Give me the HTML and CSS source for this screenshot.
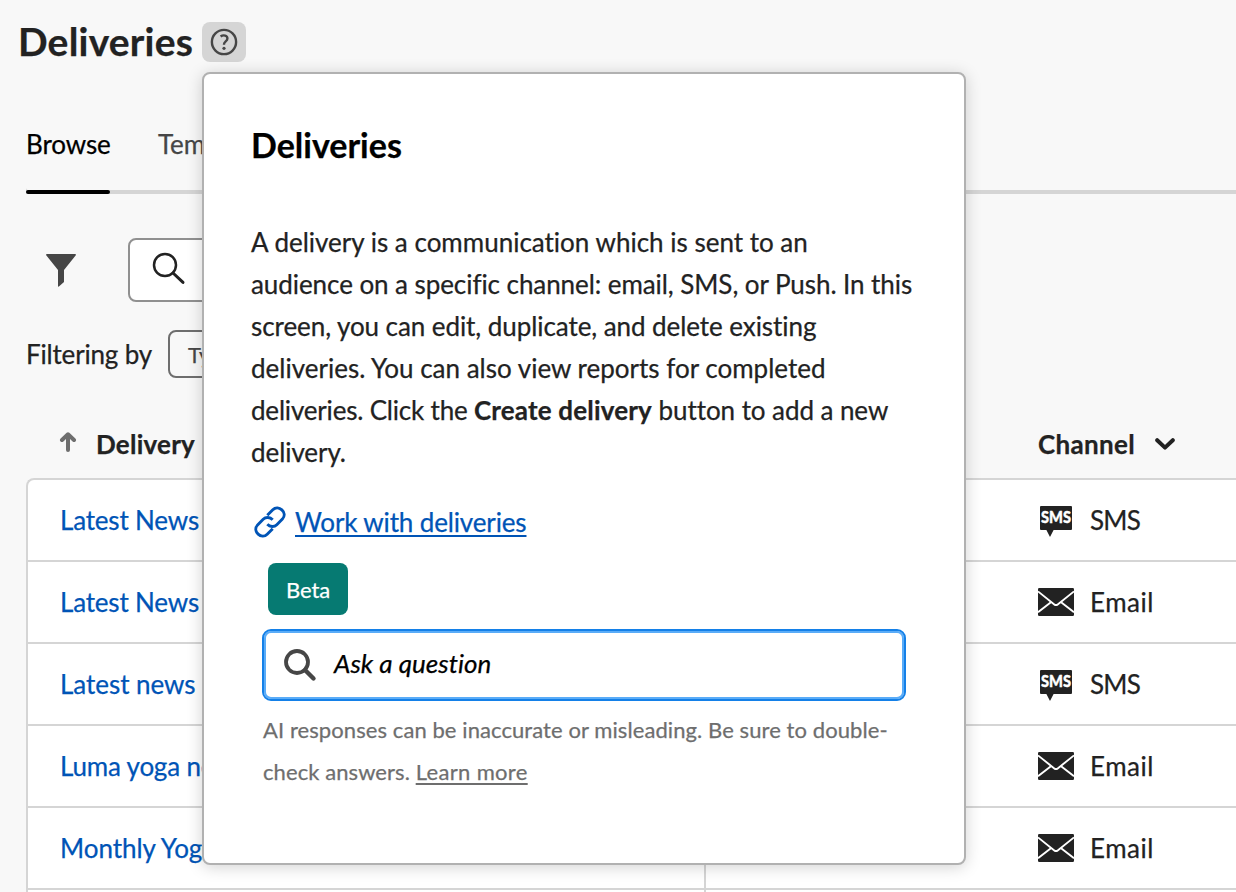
FILE: index.html
```
<!DOCTYPE html>
<html lang="en">
<head>
<meta charset="utf-8">
<title>Deliveries</title>
<link rel="stylesheet" href="styles.css">
</head>
<body>
<svg class="sprite" aria-hidden="true">
  <symbol id="mail" viewBox="0 0 36 28">
    <rect width="36" height="28" rx="1.2" fill="#222"/>
    <path d="M0 3.4 16.3 16.4Q18 17.8 19.7 16.4L36 3.4M0 24.2 13.2 14.1M36 24.2 22.8 14.1" fill="none" stroke="#fff" stroke-width="1.9"/>
  </symbol>
  <symbol id="sms" viewBox="0 0 36 32">
    <path d="M3 0H33a1 1 0 0 1 1 1V23a1 1 0 0 1-1 1H15.6L12 31 8.4 24H3a1 1 0 0 1-1-1V1a1 1 0 0 1 1-1Z" fill="#222"/>
    <text class="sms-text" x="18" y="17" text-anchor="middle" textLength="30" lengthAdjust="spacingAndGlyphs">SMS</text>
  </symbol>
</svg>
<main class="page">
  <header class="header">
    <h1 class="title">Deliveries</h1>
    <button class="help" aria-label="Help">
      <svg width="28" height="28" viewBox="0 0 28 28" fill="none" stroke="#464646">
        <circle cx="14" cy="14" r="12.1" stroke-width="2.4"/>
        <path d="M10.6 8.5C13.5 6.4 17.4 7.5 17.4 10.4C17.4 13.2 14 13.4 14 16.2V16.7" stroke-width="2.4"/>
        <circle cx="14" cy="20.3" r="1.6" fill="#464646" stroke="none"/>
      </svg>
    </button>
  </header>
  <nav class="tabs">
    <a class="tab tab-active">Browse</a>
    <a class="tab">Templates</a>
  </nav>
  <div class="toolbar">
    <svg class="funnel" width="30" height="33" viewBox="0 0 30 33"><path d="M.8 0H29.2a.8.8 0 0 1 .6 1.3L18 16V28L12.9 32.5Q12 33 12 32V16L.2 1.3A.8.8 0 0 1 .8 0Z" fill="#464646"/></svg>
    <div class="search">
      <svg width="34" height="34" viewBox="0 0 34 34" fill="none" stroke="#222"><circle cx="13" cy="13" r="11" stroke-width="2.5"/><path d="M21 21 31 30.4" stroke-width="3" stroke-linecap="round"/></svg>
    </div>
  </div>
  <div class="filters">
    <span class="filters-label">Filtering by</span>
    <span class="tag">Type</span>
  </div>
  <div class="table-head">
    <div class="head-name">
      <svg width="18" height="20" viewBox="0 0 18 20" fill="none" stroke="#6e6e6e" stroke-width="4" stroke-linecap="round" stroke-linejoin="round"><path d="M9 18V3M3 8 9 2.3 15 8"/></svg>
      <span class="head-text">Delivery</span>
    </div>
    <div class="head-channel">
      <span class="head-channel-text">Channel</span>
      <svg width="20" height="12" viewBox="0 0 20 12" fill="none" stroke="#222" stroke-width="4" stroke-linecap="round" stroke-linejoin="round"><path d="M2.2 2.2 10 9.6 17.8 2.2"/></svg>
    </div>
  </div>
  <div class="table">
    <div class="row"><a class="name">Latest News</a><div class="channel"><svg class="icon icon-sms"><use href="#sms"/></svg><span class="sms-label">SMS</span></div></div>
    <div class="row"><a class="name">Latest News</a><div class="channel"><svg class="icon"><use href="#mail"/></svg><span class="email-label">Email</span></div></div>
    <div class="row"><a class="name name-wide">Latest news to</a><div class="channel"><svg class="icon icon-sms"><use href="#sms"/></svg><span class="sms-label">SMS</span></div></div>
    <div class="row"><a class="name">Luma yoga news</a><div class="channel"><svg class="icon"><use href="#mail"/></svg><span class="email-label">Email</span></div></div>
    <div class="row"><a class="name name-wide">Monthly Yoga</a><div class="channel"><svg class="icon"><use href="#mail"/></svg><span class="email-label">Email</span></div></div>
    <div class="row"></div>
  </div>
</main>
<section class="popover">
  <h2 class="pop-title">Deliveries</h2>
  <p class="pop-text"><span class="first-line">A delivery is a communication which is sent to an</span><br>audience on a specific channel: email, SMS, or Push. In this<br>screen, you can edit, duplicate, and delete existing<br><span class="first-line">deliveries. You can also view reports for completed</span><br><span class="click">deliveries. Click the </span><strong>Create delivery</strong> button to add a new<br>delivery.</p>
  <a class="doc-link">
    <svg width="36" height="36" viewBox="0 0 36 36" fill="none" stroke="#0054b6" stroke-width="2.9" stroke-linecap="butt"><path d="M15.3 11.2 20.8 5.7C26.4.1 36.2 8.6 30.4 15.1L24.8 20.7C22.2 23.3 18 23.1 15.3 20.3"/><path d="M20.7 24.8 15.2 30.3C9.6 35.9-.2 27.4 5.6 20.9L11.2 15.3C13.8 12.7 18 12.9 20.7 15.7"/></svg>
    <span class="doc-text">Work with deliveries</span>
  </a>
  <span class="badge">Beta</span>
  <div class="ask">
    <svg width="34" height="34" viewBox="0 0 34 34" fill="none" stroke="#464646"><circle cx="14" cy="14" r="11" stroke-width="3.8"/><path d="M22 22 30.5 30.5" stroke-width="4.4" stroke-linecap="round"/></svg>
    <span class="ask-text">Ask a question</span>
  </div>
  <p class="note">AI responses can be inaccurate or misleading. Be sure to double-<br>check answers. <a class="more">Learn more</a></p>
</section>
</body>
</html>
```
FILE: styles.css
```
* { box-sizing: border-box; }
body {
  margin: 0;
  width: 1236px;
  height: 892px;
  overflow: hidden;
  position: relative;
  background: #f8f8f8;
  color: #222;
  font: 26px/32px Lato, "Noto Sans", sans-serif;
  font-variant-ligatures: none;
  letter-spacing: -0.07px;
  white-space: nowrap;
  -webkit-text-stroke: .25px currentColor;
}
h1, h2, p { margin: 0; }
svg { display: block; flex: none; }
.sprite { position: absolute; width: 0; height: 0; }
.sms-text { font: 900 16.5px Lato, sans-serif; fill: #fff; stroke: #fff; stroke-width: .4px; letter-spacing: 0; }

.page { height: 892px; overflow: hidden; display: flex; flex-direction: column; }
.page > * { flex: none; }
.header { display: flex; align-items: center; gap: 10px; padding: 22px 0 0 18px; height: 62px; }
.title { width: 174px; font-size: 39px; line-height: 48px; font-weight: 700; letter-spacing: .2px; padding-bottom: 3px; }
.help {
  display: flex; align-items: center; justify-content: center;
  width: 44px; height: 40px; padding: 0; border: 0; border-radius: 8px; background: #d5d5d5;
}

.tabs { display: flex; gap: 48px; margin-left: 26px; height: 132px; padding-top: 66px; box-shadow: inset 0 -4px #d5d5d5; border-radius: 2px 0 0 2px; }
.tab { position: relative; height: 66px; color: #464646; }
.tab-active { width: 84px; color: #000; letter-spacing: -.1px; }
.tab-active::after { content: ""; position: absolute; left: 0; right: 0; bottom: 0; height: 4px; border-radius: 2px; background: #000; }

.toolbar { display: flex; align-items: flex-start; padding: 44px 0 0 46px; }
.funnel { margin-top: 16px; }
.search { width: 440px; height: 64px; margin-left: 52px; padding: 12px 22px; border: 2px solid #909090; border-radius: 8px; background: #fff; }

.filters { display: flex; align-items: center; height: 48px; margin: 28px 0 0 26px; }
.filters-label { width: 142px; letter-spacing: -.17px; }
.tag { height: 48px; width: 260px; padding: 0 18px; border: 2px solid #6e6e6e; border-radius: 8px; color: #464646; font-size: 22px; line-height: 46px; }

.table-head { display: flex; align-items: center; height: 100px; padding: 32px 0 0 59px; font-weight: 700; letter-spacing: .23px; }
.head-name { display: flex; align-items: center; gap: 19px; width: 979px; }
.head-name svg { margin-bottom: 4px; }
.head-channel { display: flex; align-items: center; gap: 20px; }
.head-channel-text { letter-spacing: .32px; }

.table { margin-left: 26px; border: 2px solid #d5d5d5; border-width: 2px 0 0 2px; border-radius: 8px 0 0 0; background: linear-gradient(to right, #fff 676px, #d5d5d5 676px 678px, #fff 678px); }
.row { display: flex; align-items: center; height: 82px; padding-left: 32px; border-bottom: 2px solid #d5d5d5; }
.name { width: 978px; color: #0054b6; letter-spacing: -.18px; }
.name-wide { letter-spacing: -.04px; }
.channel { display: flex; align-items: center; gap: 16px; }
.icon { width: 36px; height: 28px; }
.icon-sms { height: 32px; margin-top: 4px; }
.sms-label { letter-spacing: -.8px; }
.email-label { letter-spacing: .5px; }

.popover {
  position: absolute; left: 202px; top: 72px; width: 764px; height: 793px;
  padding: 47px 48px 0 47px; border: 2px solid #b1b1b1; border-radius: 8px; background: #fff;
  box-shadow: 0 2px 16px rgba(0, 0, 0, .18);
  display: flex; flex-direction: column; align-items: flex-start;
}
.pop-title { color: #000; font-size: 34px; line-height: 48px; letter-spacing: 0; }
.pop-text { line-height: 42px; margin-top: 52px; }
.first-line { letter-spacing: 0; }
.click { letter-spacing: -.19px; }
.pop-text strong { letter-spacing: .17px; }
.doc-link { display: flex; align-items: center; gap: 8px; height: 36px; margin: 31px 0 0 1px; color: #0054b6; }
.doc-text { margin-left: -1px; letter-spacing: -.14px; text-decoration: underline; text-decoration-thickness: 2px; text-underline-offset: 3px; text-decoration-skip-ink: none; }
.badge { width: 80px; height: 52px; margin: 23px 0 0 17px; border-radius: 8px; background: #067a72; color: #fff; font-size: 22px; line-height: 53px; text-align: center; letter-spacing: -.1px; }
.ask {
  display: flex; align-items: center; gap: 17px; width: 644px; height: 72px; margin: 14px 0 0 11px; padding-left: 19px;
  border: 2px solid #1480e8; border-radius: 9px; box-shadow: inset 0 0 0 2px #5aacf8;
}
.ask-text { color: #000; font-style: italic; letter-spacing: .02px; padding-bottom: 4px; }
.note { margin: 8px 0 0 12px; color: #6e6e6e; font-size: 22px; line-height: 42px; letter-spacing: .08px; }
.more { letter-spacing: .33px; text-decoration: underline; text-decoration-thickness: 2px; text-underline-offset: 3px; text-decoration-skip-ink: none; }
```
